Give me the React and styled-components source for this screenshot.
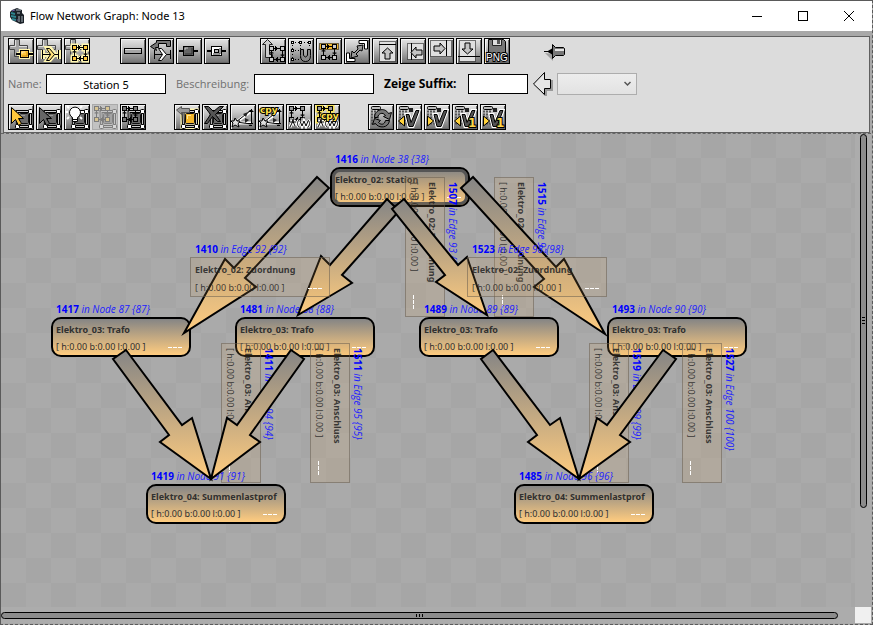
import React from "react";
import styled, { createGlobalStyle, css } from "styled-components";

const GlobalStyle = createGlobalStyle`
  * { box-sizing: border-box; }
  body { margin: 0; background: #a8a8a8; font-family: "Open Sans", "Noto Sans", sans-serif; }
  #root { min-height: 100vh; display: flex; flex-direction: column; }
`;

const AppWindow = styled.div`
  flex: 1;
  display: flex;
  flex-direction: column;
  border: 1px solid #5a5a5a;
  border-right-style: dashed;
  border-bottom-style: dashed;
  background: #a8a8a8;
`;

const TitleBar = styled.header`
  display: flex;
  align-items: center;
  height: 30px;
  padding-left: 8px;
  background: #fff;
`;

const Title = styled.h1`
  flex: 1;
  margin: 0 0 0 5px;
  font-family: "Noto Sans", sans-serif;
  font-size: 11px;
  font-weight: 400;
  line-height: 16px;
  color: #000;
`;

const WindowButton = styled.button`
  display: flex;
  align-items: center;
  justify-content: center;
  width: 46px;
  height: 30px;
  padding: 0;
  border: 0;
  background: transparent;
`;

const ToolPanel = styled.section`
  display: flex;
  flex-direction: column;
  gap: 8px;
  margin: 5px 2px 0 2px;
  padding: 1px 4px 2px;
  border: 1px solid #606060;
  background: #dcdcdc;
`;

const ToolRow = styled.div`
  display: flex;
  align-items: center;
  gap: ${(p) => p.$gap}px;
`;

const ToolGroup = styled.div`
  display: flex;
  gap: 2px;
`;

const ToolButton = styled.button`
  display: block;
  width: 26px;
  height: 26px;
  padding: 0;
  border: 1px solid #000;
  background: linear-gradient(#e4e4e4, #c8c8c8 30%, #707070);
  box-shadow: inset 1px 1px 0 #f4f4f4, inset -1px -1px 0 #666;
  &:disabled {
    border-color: #aaa;
    background: #c2c2c2;
    box-shadow: none;
    & > svg { opacity: 0.35; }
  }
`;

const PlainButton = styled.button`
  display: block;
  padding: 0;
  border: 0;
  background: transparent;
`;

const Icon = styled.svg`
  display: block;
`;

const FormRow = styled.div`
  display: flex;
  align-items: center;
  height: 24px;
`;

const FieldLabel = styled.label`
  display: flex;
  align-items: center;
  gap: ${(p) => p.$gap || 4}px;
  margin-right: ${(p) => (p.$strong ? 5 : 10)}px;
  font-size: ${(p) => (p.$strong ? 12 : 11)}px;
  line-height: 16px;
  font-weight: ${(p) => (p.$strong ? 700 : 400)};
  color: ${(p) => (p.$strong ? "#000" : "#707070")};
  white-space: nowrap;
`;

const LabelText = styled.span`
  width: ${(p) => p.$width}px;
`;

const TextInput = styled.input`
  width: ${(p) => p.$width}px;
  height: 20px;
  padding: 0 4px;
  border: 1px solid #000;
  background: #fff;
  font: 400 11px "Noto Sans", sans-serif;
  text-align: center;
  color: #000;
`;

const SuffixSelectFrame = styled.div`
  display: grid;
  margin-left: 4px;
  & > * { grid-area: 1 / 1; }
  & > svg { justify-self: end; align-self: center; margin-right: 6px; pointer-events: none; }
`;

const SuffixSelect = styled.select`
  width: 80px;
  height: 22px;
  appearance: none;
  border: 1px solid #adadad;
  border-radius: 0;
  background: linear-gradient(#ededed, #e2e2e2);
  opacity: 1;
`;

const Workspace = styled.main`
  flex: 1;
  display: grid;
  grid-template-columns: 1fr 16px;
  grid-template-rows: 1fr 16px;
  margin: 0 1px 1px 0;
  border-top: 1px dashed #666;
`;

const Canvas = styled.div`
  position: relative;
  overflow: hidden;
  min-height: 400px;
  background: conic-gradient(#aaaaaa 25%, #a6a6a6 0 50%, #aaaaaa 0 75%, #a6a6a6 0) 0 -1px / 50px 50px;
`;

const Edges = styled.svg`
  position: absolute;
  inset: 0;
  width: 100%;
  height: 100%;
`;

const NodeGroup = styled.div`
  position: absolute;
  left: ${(p) => p.$x}px;
  top: ${(p) => p.$y}px;
  width: 140px;
  height: 40px;
  transform-origin: 0 0;
  ${(p) => p.$turned && css`transform: rotate(90deg);`}
`;

const NodeCaption = styled.div`
  position: absolute;
  left: 5px;
  bottom: 41px;
  font-size: 10px;
  line-height: 14px;
  font-style: italic;
  color: #1d1dff;
  white-space: nowrap;
  & > b { font-style: normal; color: #0000ff; }
`;

const NodeName = styled.div`
  font-size: 9px;
  line-height: 14px;
  font-weight: 700;
`;

const NodeValues = styled.div`
  display: flex;
  justify-content: space-between;
  padding: 3px 7px 0 0;
  font-size: 9px;
  line-height: 14px;
`;

const NodeBox = styled.div`
  position: relative;
  height: 40px;
  padding: 4px 0 0 3px;
  overflow: hidden;
  border: 2px solid #000;
  border-radius: 10px;
  background: linear-gradient(#858585, #ffcc7f);
  font-family: "Noto Sans", sans-serif;
  white-space: nowrap;
  color: #303030;
  ${(p) => p.$selected && css`box-shadow: inset 0 0 0 3px #555;`}
  ${(p) => p.$ghost && css`
    padding: 5px 0 0 4px;
    border: 1px solid rgba(95, 88, 78, 0.5);
    border-radius: 0;
    background: rgba(215, 165, 100, 0.16);
    color: rgba(35, 35, 35, 0.85);
    ${NodeValues} { padding-top: 4px; }
  `}
`;

const Dashes = styled.span`
  align-self: center;
  width: 14px;
  height: 1px;
  background: repeating-linear-gradient(90deg, #fff 0 4px, transparent 4px 5px);
`;

const VerticalTrack = styled.div`
  display: flex;
  justify-content: center;
  background: #acacac;
`;

const HorizontalTrack = styled.div`
  display: flex;
  align-items: center;
  background: #acacac;
`;

const Thumb = styled.div`
  display: flex;
  align-items: center;
  justify-content: center;
  border: 1px solid #000;
  border-radius: 4px;
  background: #8c8c8c;
  ${(p) => (p.$vertical ? css`width: 7px; height: 79%;` : css`height: 7px; width: 98%;`)}
`;

const Grip = styled.span`
  ${(p) => (p.$vertical
    ? css`width: 3px; height: 7px; background: repeating-linear-gradient(#000 0 1px, transparent 1px 3px);`
    : css`width: 7px; height: 3px; background: repeating-linear-gradient(90deg, #000 0 1px, transparent 1px 3px);`)}
`;

const Corner = styled.div`
  background: #f0f0f0;
`;

/* ---- icon parts, all on a 24 x 24 grid ---- */

const Cross = () => (
  <g>
    <path d="M5.500 .5h5v6h8v4h-8v7h-5v-7h-5v-4h5z" fill="#a2a2a2" stroke="#444" />
    <path d="M6.500 1v6.500h-5M10 7.500h8" stroke="#ddd" fill="none" />
  </g>
);

const Net = ({ x = 0, y = 0, fill = "#ccc", glow }) => {
  const lines = "M4 2.500h7M2.500 5v6M4 13.500h7M13.500 4v7M6.500 0v5M7.500 1v3M11.500 9h4M12.500 9.500h2M8.500 11v5M7.500 12v3M0.500 7h4M1.500 6.500h2";
  const boxes = [[0, 0], [11, 0], [0, 11], [11, 11]];
  return (
    <g transform={`translate(${x} ${y})`}>
      {glow && <path d={`${lines}M0 0h5v5h-5zM11 0h5v5h-5zM0 11h5v5h-5zM11 11h5v5h-5z`} fill={glow} stroke={glow} strokeWidth="3" />}
      <path d={lines} stroke="#000" fill="none" />
      {boxes.map(([a, b]) => <rect key={`${a}-${b}`} x={a + 0.5} y={b + 0.5} width="4" height="4" fill={fill} stroke="#000" />)}
    </g>
  );
};

const SelBox = ({ fill = "#6a6a6a", handles = "#fff", shine = "#9a9a9a" }) => (
  <g>
    <path d="M8 6.500h13.500v15H8.500z" stroke="#000" strokeWidth="3" fill="none" />
    <path d="M8 6.500h13.500v15H8.500z" stroke="#ccc" fill="none" />
    <rect x="10.500" y="8.500" width="9" height="10" rx="1" fill={fill} stroke="#111" />
    <path d="M12 10.500h4M12.500 10v4" stroke={shine} />
    {[[19, 4], [19, 19], [6, 19]].map(([a, b]) => <rect key={`${a}-${b}`} x={a + 0.5} y={b + 0.5} width="4" height="4" rx="1" fill={handles} stroke="#000" />)}
  </g>
);

const EdgeMark = ({ glow }) => (
  <g fill="none">
    {glow && <path d="M6 11v9M22 11v9M6 16h16M10 9h3l5 6-5 6h-3l4-6z" stroke={glow} strokeWidth="4" />}
    <path d="M5.500 11v9M21.500 11v9M6 15.500h16" stroke="#000" />
    <path d="M9.500 9.500h3l5 6-5 6h-3l4-6z" fill={glow ? "#ffe27a" : "#fff"} stroke="#000" />
  </g>
);

const SmallBox = ({ fill, glow, x = 6, y = 7, w = 11, h = 10 }) => (
  <g transform={`translate(${x} ${y})`}>
    {glow && <path d={`M-3 ${h / 2}h${w + 7}M1 1h${w - 2}v${h - 2}H1z`} stroke={glow} strokeWidth="4" fill="none" />}
    <path d={`M-4 ${h / 2}h${w + 8}`} stroke="#000" strokeWidth="2" />
    <rect x="0.500" y="0.500" width={w - 1} height={h - 1} fill={fill} stroke="#000" />
    <path d={`M${w - 2} 2v${h - 4}H2`} stroke={glow ? "#c98a10" : "#333"} fill="none" />
    <path d="M2 4V2h3" stroke="#fff" fill="none" opacity="0.6" />
  </g>
);

const Pointer = ({ fill }) => (
  <path d="M2.500 2.500v16l4-4 3 6 3-2-3-5h5z" fill={fill} stroke="#000" />
);

const Copy = ({ x = 1, y = 8 }) => (
  <text x={x} y={y} fontFamily="DejaVu Sans" fontSize="9" fontWeight="700" fill="#ffe04a" stroke="#000" strokeWidth="2" paintOrder="stroke">cpy</text>
);

const Fan = () => (
  <g fill="none">
    <path d="M4 18L19 7M4 18h16" stroke="#fff" strokeWidth="3" />
    <path d="M5 17L19 6M5 17l15 2" stroke="#000" />
    <path d="M20.500 4v15M17.500 6.500h5M18.500 5.500h3M17 18.500h5M18 20.500h3" stroke="#000" />
    <path d="M14 13l4 2-4 3zM12 9l5-2-2 5z" fill="#222" />
    <path d="M4 13l2 3h3l-2 3 1 3-4-2-3 2 1-4-2-2h3z" fill="#ddd" stroke="#000" />
  </g>
);

const Branch = () => {
  const strokes = "M3 17h6M5 14l3 7M7 14l-4 8M12 15c-2 2-2 5 0 7M13 16l2 5 2-5 2 5 2-5M21 15c2 2 2 5 0 7";
  return (
    <g fill="none">
      <path d={strokes} stroke="#fff" strokeWidth="3" />
      <path d={strokes} stroke="#000" />
    </g>
  );
};

const Sprayed = () => (
  <g>
    <path d="M2 6.500h9M2 9.500h9M2 12.500h9M2 15.500h9M2 18.500h9" stroke="#555" strokeDasharray="2 1" strokeWidth="2" />
    <rect x="2.500" y="1.500" width="9" height="3" rx="1" fill="#bbb" stroke="#000" />
  </g>
);

const Variant = ({ dir, numbered }) => (
  <g>
    <Sprayed />
    <path d={dir === "left" ? "M7.500 11v10L1.500 16z" : "M2.500 11v10l6-5z"} fill="#ffd23c" stroke="#000" />
    <path d="M9 9.500h3l2 8 5-12h3l-6 16h-4z" fill="#777" stroke="#fff" strokeWidth="3" />
    <path d="M9 9.500h3l2 8 5-12h3l-6 16h-4z" fill="#555" stroke="#000" />
    <rect x="12" y="3" width="4" height="4" fill="#222" />
    {numbered && <text x="15" y="22" fontFamily="DejaVu Sans" fontSize="12" fontWeight="700" fill="#ffd84a" stroke="#000" strokeWidth="2" paintOrder="stroke">1</text>}
  </g>
);

/* A dotted frame, the guide line it sticks to and an arrow towards that line. */
const AlignMark = ({ frame, guide, turn, cx, cy }) => (
  <g>
    <rect x={frame[0] + 0.5} y={frame[1] + 0.5} width={frame[2]} height={frame[3]} fill="#e0e0e0" stroke="#000" strokeDasharray="1 1" />
    <path d={guide} stroke="#000" />
    <path d="M0-5.500l5.500 5h-3v6h-5v-6h-3z" transform={`translate(${cx} ${cy}) rotate(${turn})`} fill="#c4c4c4" stroke="#000" />
  </g>
);

const drawings = {
  addNode: <><Cross /><SmallBox x={11} y={11} w={9} h={8} fill="#ffc83c" glow="#fff6b0" /></>,
  addEdge: <><Cross /><EdgeMark glow="#fff6b0" /></>,
  addNet: <><Cross /><Net x={7} y={6} fill="#ffc83c" glow="#fff6b0" /></>,
  bar: <><rect x="3.500" y="9.500" width="17" height="5" fill="#a4a4a4" stroke="#000" /><path d="M4 10.500h16" stroke="#ddd" /></>,
  turnEdge: <><path d="M7.500 1.500h14v6h-4v-3h-8v4h-3l1 3-6-4 6-4z" fill="#777" stroke="#000" /><EdgeMark /></>,
  darkBox: <SmallBox fill="#666" />,
  frameBox: <><SmallBox fill="#fff" /><rect x="9.500" y="10.500" width="4" height="3" fill="#bbb" stroke="#000" /></>,
  moveNet: <><path d="M6.500 .5l5 5h-3v10h3v3h-7v-13h-3z" fill="#ccc" stroke="#222" /><Net x={8} y={7} /></>,
  snap: (
    <>
      <path d="M3 3.500h18M3 11.500h9M3 20.500h8M3.500 3v18M11.500 3v17M20.500 3v6" stroke="#000" strokeDasharray="1 2" />
      <path d="M2 3.500h3M10 3.500h3M19 3.500h3M2 11.500h3M2 20.500h3" stroke="#000" strokeWidth="3" />
      <path d="M3 3.500h1M11 3.500h1M20 3.500h1M3 11.500h1M3 20.500h1" stroke="#fff" />
      <path d="M11.500 10.500v6q0 6 5 6t5-6v-6h-3v6q-2 3-4 0v-6z" fill="#888" stroke="#000" />
    </>
  ),
  alignBand: <><rect x="2.500" y="4.500" width="19" height="6" fill="#f2b62c" stroke="#000" strokeDasharray="1 1" /><Net x={4} y={5} /></>,
  expand: (
    <>
      <path d="M14 1.500h8.500v8.500h-3V4.500H14zM1.500 14h3v5.500H10v3H1.500z" fill="#fff" stroke="#000" />
      <path d="M12 7l6-1-1 6-2-1-4 4 2 2-7 2 1-7 2 2 4-4z" fill="#999" stroke="#000" />
    </>
  ),
  alignTop: <AlignMark frame={[6, 2, 16, 20]} guide="M6 5.500h17" turn={0} cx={14.5} cy={14.5} />,
  alignLeft: <AlignMark frame={[6, 4, 16, 16]} guide="M10.500 4v17" turn={-90} cx={15.5} cy={13.5} />,
  alignRight: <AlignMark frame={[1, 1, 21, 16]} guide="M17.500 1v16" turn={90} cx={10.5} cy={9.5} />,
  alignBottom: <AlignMark frame={[2, 1, 16, 21]} guide="M1 17.500h22" turn={180} cx={10.5} cy={9.5} />,
  png: (
    <>
      <path d="M3.500 .5h15l2 2v13h-17z" fill="#777" stroke="#000" />
      <path d="M7.500 .5h9v6h-9z" fill="#ddd" stroke="#222" />
      <path d="M12 1h3v4h-3z" fill="#555" />
      <text x="1" y="22" fontFamily="Liberation Sans" fontSize="10" fill="#fff" stroke="#000" strokeWidth="2" paintOrder="stroke">PNG</text>
    </>
  ),
  select: <><SelBox /><Pointer fill="#ffc83c" /></>,
  selectSub: <><SelBox /><Pointer fill="#666" /></>,
  light: (
    <>
      <SelBox />
      <path d="M2 1l2 2M17 1l-2 2M0 7h3M16 7h3M2 14l2-2M17 14l-2-2" stroke="#fff" strokeWidth="2" />
      <path d="M7.500 12.500a5.500 5.500 0 1 1 5 0v4h-5z" fill="#fff" stroke="#000" />
      <path d="M8 14.500h4" stroke="#000" />
    </>
  ),
  netGray: <><SelBox /><Net x={1} y={1} fill="#ffc83c" /></>,
  netDark: <><SelBox /><Net x={1} y={1} fill="#777" /></>,
  yellowBox: <><path d="M8 6h14v16H8z" fill="none" stroke="#fff6b0" strokeWidth="5" /><SelBox fill="#f2b62c" shine="#ffe890" /><path d="M1.500 5l5-3.500v2h8v4h-8v2z" fill="#999" stroke="#555" /></>,
  remove: <><SelBox /><path d="M1.500 1.500h4l5 5 6-5h4l-8 8 5 7h-3l-5-5-5 7h-3l6-9z" fill="#555" stroke="#000" /></>,
  fan: <Fan />,
  fanCopy: <><Fan /><Copy /></>,
  netBranch: <><Net x={2} y={1} fill="#999" /><Branch /></>,
  netCopy: <><Net x={2} y={1} fill="#999" glow="#f7e25a" /><Branch /><Copy x={6} y={14} /></>,
  refresh: (
    <>
      <Sprayed />
      <path d="M5.500 12.500c0-8 10-11 14-4l3-1-2 7-6-3 2-1c-3-4-7-2-8 2zM20.500 15.500c-1 8-11 8-14 3l-3 1 2-6 6 2-2 2c3 3 6 2 7-2z" fill="#777" stroke="#000" />
    </>
  ),
  variantPrev: <Variant dir="left" />,
  variantNext: <Variant dir="right" />,
  variantPrevOne: <Variant dir="left" numbered />,
  variantNextOne: <Variant dir="right" numbered />,
};

const topTools = [
  ["addNode", "addEdge", "addNet"],
  ["bar", "turnEdge", "darkBox", "frameBox"],
  ["moveNet", "snap", "alignBand", "expand", "alignTop", "alignLeft", "alignRight", "alignBottom", "png"],
];

const bottomTools = [
  ["select", "selectSub", "light", "netGray", "netDark"],
  ["yellowBox", "remove", "fan", "fanCopy", "netBranch", "netCopy"],
  ["refresh", "variantPrev", "variantNext", "variantPrevOne", "variantNextOne"],
];

const ToolGroups = ({ groups }) => groups.map((group) => (
  <ToolGroup key={group[0]}>
    {group.map((name) => (
      <ToolButton key={name} type="button" aria-label={name} disabled={name === "netGray"}>
        <Icon width="24" height="24" viewBox="0 0 24 24" fill="none">{drawings[name]}</Icon>
      </ToolButton>
    ))}
  </ToolGroup>
));

const TRAFO = "Elektro_03: Trafo";
const ZUORDNUNG = "Elektro_02: Zuordnung";
const ANSCHLUSS = "Elektro_03: Anschluss";
const SUMME = "Elektro_04: Summenlastprof";

/*
 * Painted in this order. Positions are canvas coordinates of the top left
 * corner before turning; a ghost is the translucent box that belongs to an edge.
 */
const belowArrows = [
  { id: 1416, where: "in Node 38 {38}", name: "Elektro_02: Station", x: 329, y: 33, selected: true },
  { id: 1507, where: "in Edge 93 {93}", name: ZUORDNUNG, x: 444, y: 43, turned: true, ghost: true },
  { id: 1515, where: "in Edge 97 {97}", name: ZUORDNUNG, x: 533, y: 43, turned: true, ghost: true },
  { id: 1417, where: "in Node 87 {87}", name: TRAFO, x: 50, y: 183 },
  { id: 1481, where: "in Node 88 {88}", name: TRAFO, x: 234, y: 183 },
  { id: 1489, where: "in Node 89 {89}", name: TRAFO, x: 418, y: 183 },
  { id: 1493, where: "in Node 90 {90}", name: TRAFO, x: 606, y: 183 },
  { id: 1411, where: "in Edge 94 {94}", name: ANSCHLUSS, x: 260, y: 209, turned: true, ghost: true },
  { id: 1511, where: "in Edge 95 {95}", name: ANSCHLUSS, x: 349, y: 209, turned: true, ghost: true },
  { id: 1519, where: "in Edge 99 {99}", name: ANSCHLUSS, x: 628, y: 209, turned: true, ghost: true },
  { id: 1527, where: "in Edge 100 {100}", name: ANSCHLUSS, x: 721, y: 209, turned: true, ghost: true },
  { id: 1419, where: "in Node 91 {91}", name: SUMME, x: 145, y: 350 },
  { id: 1485, where: "in Node 96 {96}", name: SUMME, x: 513, y: 350 },
];

const aboveArrows = [
  { id: 1410, where: "in Edge 92 {92}", name: ZUORDNUNG, x: 189, y: 123, ghost: true },
  { id: 1523, where: "in Edge 98 {98}", name: ZUORDNUNG, x: 466, y: 123, ghost: true },
];

const arrows = [
  "316,43 328,54 244,144 255,153 183,199 224,125 233,134",
  "386,65 398,77 341,141 351,149 297,181 320,122 329,131",
  "403,65 391,75 444,141 435,148 486,181 466,123 457,131",
  "472,43 460,54 543,145 533,153 604,200 563,125 555,133",
  "125,216 112,225 168,301 159,308 210,345 191,284 181,291",
  "290,216 303,225 249,301 259,308 210,345 226,284 236,291",
  "492,216 480,225 536,301 527,308 578,345 559,284 549,291",
  "662,216 675,225 619,301 629,308 578,345 596,284 606,291",
];

const GraphItem = ({ item }) => (
  <NodeGroup $x={item.x} $y={item.y} $turned={item.turned}>
    <NodeCaption><b>{item.id}</b> {item.where}</NodeCaption>
    <NodeBox $ghost={item.ghost} $selected={item.selected}>
      <NodeName>{item.name}</NodeName>
      <NodeValues>[ h:0.00 b:0.00 l:0.00 ]<Dashes /></NodeValues>
    </NodeBox>
  </NodeGroup>
);

export default function App() {
  return (
    <>
      <GlobalStyle />
      <AppWindow>
        <TitleBar>
          <Icon width="16" height="16" viewBox="0 0 16 16">
            <path d="M3 2l5-2 5 2v3l2 2v8l-4 1-4-2-4-2-2-3V4z" fill="#1b2128" />
            <path d="M2 5l4 1M2 8l5 1M3 11l4 1" stroke="#2d8590" strokeWidth="2" />
            <path d="M7 2h5M8 5h3M10 8v6M13 8v6" stroke="#a9b5bb" strokeWidth="1" />
            <path d="M3 3l3-1M8 12h1" stroke="#6c5ca8" />
          </Icon>
          <Title>Flow Network Graph: Node 13</Title>
          <WindowButton type="button" aria-label="Minimize">
            <Icon width="12" height="12" viewBox="0 0 12 12"><path d="M1 6.500h10" stroke="#000" /></Icon>
          </WindowButton>
          <WindowButton type="button" aria-label="Maximize">
            <Icon width="12" height="12" viewBox="0 0 12 12"><rect x="1.500" y="1.500" width="9" height="9" fill="none" stroke="#000" /></Icon>
          </WindowButton>
          <WindowButton type="button" aria-label="Close">
            <Icon width="12" height="12" viewBox="0 0 12 12"><path d="M1 1l10 10M11 1L1 11" stroke="#000" /></Icon>
          </WindowButton>
        </TitleBar>

        <ToolPanel>
          <ToolRow $gap={30}>
            <ToolGroups groups={topTools} />
            <PlainButton type="button" aria-label="Pin">
              <Icon width="26" height="24" viewBox="0 0 26 24">
                <path d="M5 14l8 8v-7z" fill="#a0a0a0" />
                <path d="M4 12.500h8" stroke="#000" />
                <path d="M7 12.500l5-3v6z" fill="#000" />
                <path d="M12.500 5.500l3 3h8l1 1v6l-1 1h-8l-3 3z" fill="#777" stroke="#000" />
                <path d="M15 11h9" stroke="#e4e4e4" strokeWidth="2" />
              </Icon>
            </PlainButton>
          </ToolRow>
          <FormRow>
            <FieldLabel $gap={3}><LabelText $width={35}>Name:</LabelText><TextInput $width={120} defaultValue="Station 5" /></FieldLabel>
            <FieldLabel><LabelText $width={74}>Beschreibung:</LabelText><TextInput $width={120} /></FieldLabel>
            <FieldLabel $strong $gap={8}><LabelText $width={76}>Zeige Suffix:</LabelText><TextInput $width={60} /></FieldLabel>
            <PlainButton type="button" aria-label="Suffix übernehmen">
              <Icon width="20" height="24" viewBox="0 0 20 24">
                <path d="M4 13l9 11v-6h6V8" fill="none" stroke="#999" strokeWidth="2" />
                <path d="M0.500 12L11.500 0.500v7h6v9h-6v6z" fill="#e6e6e6" stroke="#000" />
              </Icon>
            </PlainButton>
            <SuffixSelectFrame>
              <SuffixSelect aria-label="Suffix" disabled />
              <Icon width="7" height="6" viewBox="0 0 7 6"><path d="M0.500 1l3 3 3-3" fill="none" stroke="#555" strokeWidth="1.500" /></Icon>
            </SuffixSelectFrame>
          </FormRow>
          <ToolRow $gap={28}>
            <ToolGroups groups={bottomTools} />
          </ToolRow>
        </ToolPanel>

        <Workspace>
          <Canvas>
            {belowArrows.map((item) => <GraphItem key={item.id} item={item} />)}
            <Edges>
              <defs>
                <linearGradient id="edgeFill" x1="0" y1="0" x2="0" y2="1">
                  <stop offset="0" stopColor="#858585" />
                  <stop offset="1" stopColor="#ffcc7f" />
                </linearGradient>
              </defs>
              {arrows.map((points) => (
                <polygon key={points} points={points} fill="url(#edgeFill)" stroke="#000" strokeWidth="2" strokeMiterlimit="8" />
              ))}
            </Edges>
            {aboveArrows.map((item) => <GraphItem key={item.id} item={item} />)}
          </Canvas>
          <VerticalTrack><Thumb $vertical><Grip $vertical /></Thumb></VerticalTrack>
          <HorizontalTrack><Thumb><Grip /></Thumb></HorizontalTrack>
          <Corner />
        </Workspace>
      </AppWindow>
    </>
  );
}
